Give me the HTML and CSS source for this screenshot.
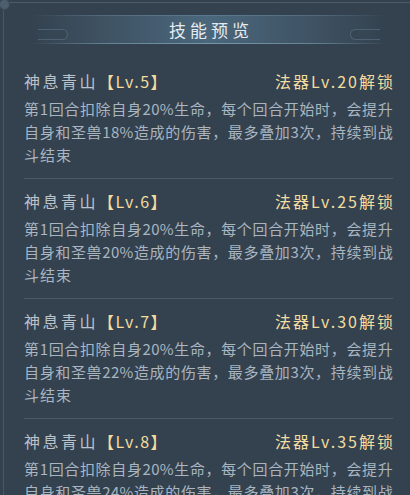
FILE: index.html
```html
<!DOCTYPE html>
<html lang="zh">
<head>
<meta charset="utf-8">
<link rel="stylesheet" href="styles.css">
</head>
<body>
<div class="panel">
  <div class="corner"></div>
  <header class="header">
    <div class="band">
      <span class="pill pill-left"></span>
      <span class="pill pill-right"></span>
      <h1 class="title">技能预览</h1>
    </div>
  </header>
  <div class="list">
    <section class="entry">
      <div class="entry-head">
        <span class="name">神息青山<span class="lv">【Lv.5】</span></span>
        <span class="unlock">法器Lv.20解锁</span>
      </div>
      <p class="desc"><span class="line">第1回合扣除自身20%生命，每个回合开始时，会提升</span><span class="line">自身和圣兽18%造成的伤害，最多叠加3次，持续到战</span><span class="line last">斗结束</span></p>
    </section>
    <section class="entry">
      <div class="entry-head">
        <span class="name">神息青山<span class="lv">【Lv.6】</span></span>
        <span class="unlock">法器Lv.25解锁</span>
      </div>
      <p class="desc"><span class="line">第1回合扣除自身20%生命，每个回合开始时，会提升</span><span class="line">自身和圣兽20%造成的伤害，最多叠加3次，持续到战</span><span class="line last">斗结束</span></p>
    </section>
    <section class="entry">
      <div class="entry-head">
        <span class="name">神息青山<span class="lv">【Lv.7】</span></span>
        <span class="unlock">法器Lv.30解锁</span>
      </div>
      <p class="desc"><span class="line">第1回合扣除自身20%生命，每个回合开始时，会提升</span><span class="line">自身和圣兽22%造成的伤害，最多叠加3次，持续到战</span><span class="line last">斗结束</span></p>
    </section>
    <section class="entry">
      <div class="entry-head">
        <span class="name">神息青山<span class="lv">【Lv.8】</span></span>
        <span class="unlock">法器Lv.35解锁</span>
      </div>
      <p class="desc"><span class="line">第1回合扣除自身20%生命，每个回合开始时，会提升</span><span class="line">自身和圣兽24%造成的伤害，最多叠加3次，持续到战</span><span class="line last">斗结束</span></p>
    </section>
  </div>
</div>
</body>
</html>
```

FILE: styles.css
```css
* { box-sizing: border-box; }
html, body {
  margin: 0;
  padding: 0;
  width: 410px;
  height: 495px;
  overflow: hidden;
  background: #34424f;
}
body {
  font-family: "Noto Sans CJK SC", "Noto Sans", sans-serif;
}
.panel {
  position: relative;
  margin: 2px 0 0 3px;
  min-height: 600px;
  border-top: 1px solid #4a5b6a;
  border-left: 1px solid #465765;
  background: #34424f;
}
.corner {
  position: absolute;
  left: -4px;
  top: -3px;
  width: 9px;
  height: 9px;
  border-radius: 50%;
  background: #4d5f6e;
  box-shadow: 0 0 0 1px #3b4a57;
}
.header {
  padding-top: 12px;
  height: 55px;
}
.band {
  position: relative;
  height: 29px;
  margin: 0 24px 0 28px;
  display: flex;
  align-items: center;
  justify-content: center;
  background: linear-gradient(90deg, rgba(72,98,118,0) 0%, rgba(72,98,118,0.5) 20%, #4b677c 50%, rgba(72,98,118,0.5) 80%, rgba(72,98,118,0) 100%);
}
.band::before,
.band::after {
  content: "";
  position: absolute;
  left: 0;
  right: 0;
  height: 1px;
}
.band::before {
  top: 0;
  background: linear-gradient(90deg, rgba(90,115,135,0) 0%, rgba(90,115,135,0.7) 20%, #5c7890 50%, rgba(90,115,135,0.7) 80%, rgba(90,115,135,0) 100%);
}
.band::after {
  bottom: 0;
  background: linear-gradient(90deg, rgba(110,140,160,0) 0%, rgba(110,140,160,0.8) 20%, #7796ab 50%, rgba(110,140,160,0.8) 80%, rgba(110,140,160,0) 100%);
}
.pill {
  position: absolute;
  top: 14px;
  width: 30px;
  height: 11px;
  border: 1px solid #4e6172;
}
.pill-left {
  left: 6px;
  border-left: none;
  border-radius: 0 6px 6px 0;
  background: linear-gradient(90deg, rgba(52,66,79,0), #364552);
}
.pill-right {
  right: 6px;
  border-right: none;
  border-radius: 6px 0 0 6px;
  background: linear-gradient(270deg, rgba(52,66,79,0), #364552);
}
.title {
  margin: 0;
  font-size: 17px;
  font-weight: normal;
  letter-spacing: 4px;
  color: #e3ebf1;
  line-height: 29px;
  padding-left: 4px;
}
.list {
  padding: 0 17px 0 20px;
}
.entry {
  padding-top: 10px;
  padding-bottom: 12px;
  border-top: 1px solid #4b5967;
}
.entry:first-child {
  border-top: none;
  padding-top: 11px;
}
.entry-head {
  display: flex;
  justify-content: space-between;
  align-items: center;
  height: 28px;
  padding-bottom: 4px;
}
.name {
  font-size: 16px;
  letter-spacing: 2.5px;
  color: #b9c3cb;
}
.lv {
  color: #f2dc9e;
  letter-spacing: 1.5px;
}
.unlock {
  font-size: 16px;
  letter-spacing: 2px;
  color: #f2dc9e;
  margin-right: -2px;
}
.desc {
  margin: 0;
  font-size: 15px;
  line-height: 23px;
  color: #a9b5c0;
}
.line {
  display: block;
  white-space: nowrap;
  text-align: justify;
  text-align-last: justify;
  letter-spacing: 0.3px;
}
.line.last {
  text-align-last: left;
  letter-spacing: 1px;
}
```
